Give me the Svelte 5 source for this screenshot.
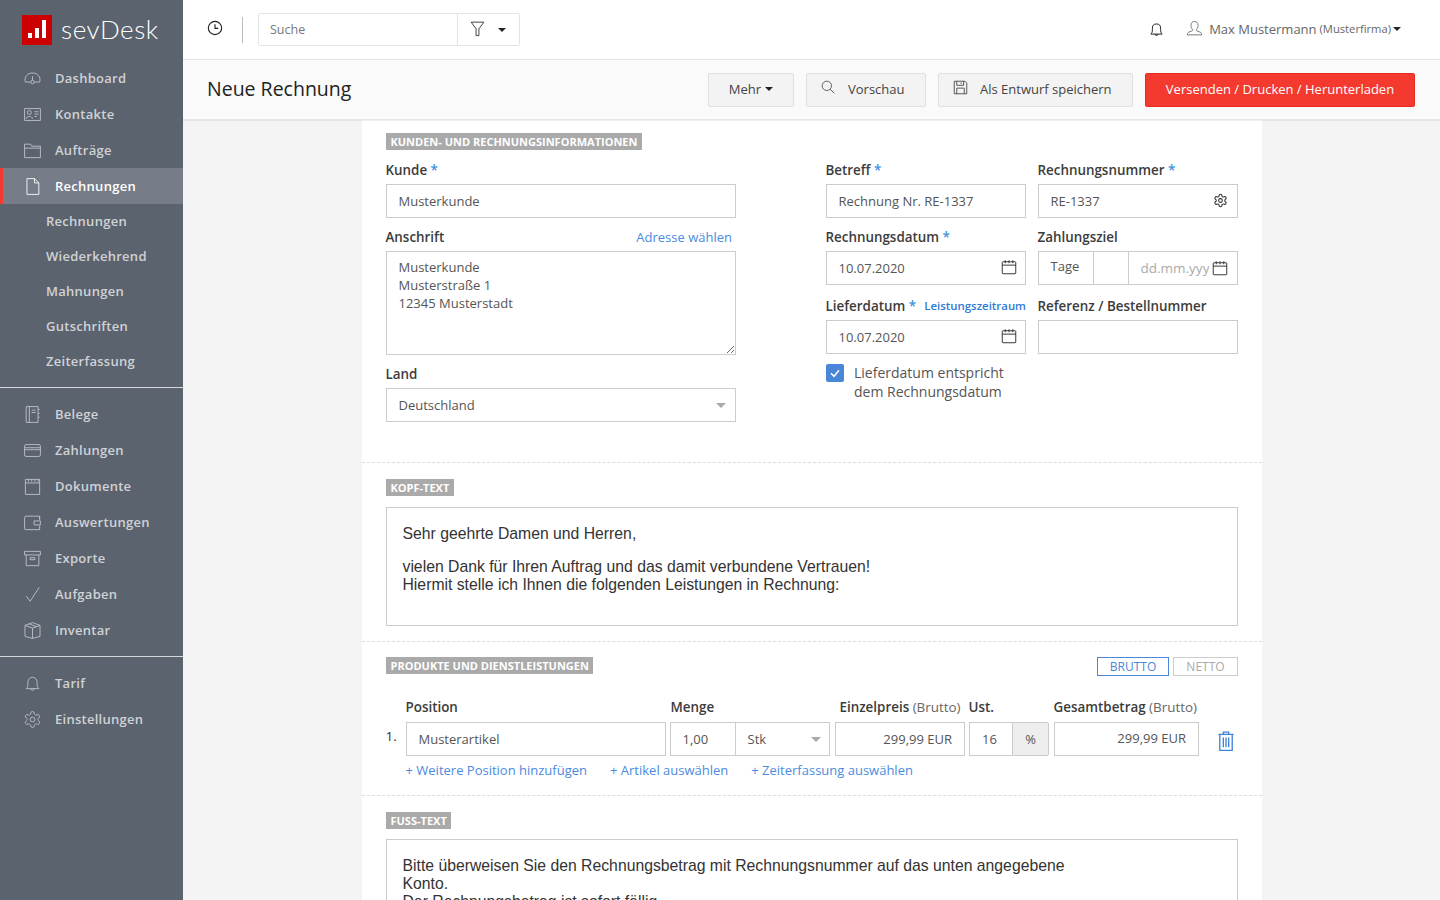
<script>
  const gear = 'M12.22 2h-.44a2 2 0 0 0-2 2v.18a2 2 0 0 1-1 1.73l-.43.25a2 2 0 0 1-2 0l-.15-.08a2 2 0 0 0-2.73.73l-.22.38a2 2 0 0 0 .73 2.73l.15.1a2 2 0 0 1 1 1.72v.51a2 2 0 0 1-1 1.74l-.15.09a2 2 0 0 0-.73 2.73l.22.38a2 2 0 0 0 2.73.73l.15-.08a2 2 0 0 1 2 0l.43.25a2 2 0 0 1 1 1.73V20a2 2 0 0 0 2 2h.44a2 2 0 0 0 2-2v-.18a2 2 0 0 1 1-1.73l.43-.25a2 2 0 0 1 2 0l.15.08a2 2 0 0 0 2.73-.73l.22-.39a2 2 0 0 0-.73-2.73l-.15-.08a2 2 0 0 1-1-1.74v-.5a2 2 0 0 1 1-1.74l.15-.09a2 2 0 0 0 .73-2.73l-.22-.38a2 2 0 0 0-2.73-.73l-.15.08a2 2 0 0 1-2 0l-.43-.25a2 2 0 0 1-1-1.73V4a2 2 0 0 0-2-2zM15 12a3 3 0 1 1-6 0a3 3 0 1 1 6 0z';
  const bell = 'M4 18.500c1.600-1.600 2.200-3 2.200-6.500V10a5.800 5.800 0 0 1 11.600 0v2c0 3.500.6 4.900 2.200 6.500zM10 18.500a2 2 0 0 0 4 0';
  const calendar = 'M4 5h16a1 1 0 0 1 1 1v14a1 1 0 0 1-1 1H4a1 1 0 0 1-1-1V6a1 1 0 0 1 1-1zM3 9.500h18M7 3v4M12 3v4M17 3v4';

  const first = [
    { label: 'Dashboard', d: 'M3 16.500C1 10.500 5.500 5 12 5s11 5.500 9 11.500h-6.800M9.800 16.500H3M12 9v5.300M9.800 16.500a2.200 2.200 0 1 0 4.400 0a2.200 2.200 0 1 0-4.400 0' },
    { label: 'Kontakte', d: 'M2 4.500h20v15H2zM8 12a2.500 2.500 0 1 0 0-5a2.500 2.500 0 0 0 0 5zM4 17.500c0-4 8-4 8 0M14.500 8.500h5M14.500 11.500h5M14.500 14.500h3' },
    { label: 'Aufträge', d: 'M2 4h7.500l1.500 2.500h11V21H2zM2 9h20' },
    { label: 'Rechnungen', d: 'M5 2h9.500L20 7.500V22H5zM14.500 2v5.500H20', active: true }
  ];
  const sub = ['Rechnungen', 'Wiederkehrend', 'Mahnungen', 'Gutschriften', 'Zeiterfassung'];
  const second = [
    { label: 'Belege', d: 'M4 2h15v20H4zM8 2v20M11 6.500h5M11 9.500h5M19 5.500h2M19 10.500h2M19 15.500h2' },
    { label: 'Zahlungen', d: 'M4 4.500h16a2 2 0 0 1 2 2v11a2 2 0 0 1-2 2H4a2 2 0 0 1-2-2v-11a2 2 0 0 1 2-2zM2 8.500h20M2 11h20' },
    { label: 'Dokumente', d: 'M3 3h18v19H3zM3 7.500h18M7 3v3M11 3v3M15 3v3M19 3v3' },
    { label: 'Auswertungen', d: 'M21 9V4H4a2 2 0 0 0-2 2v14a1 1 0 0 0 1 1h18v-5M14 10h8v5h-8zM21 4v3' },
    { label: 'Exporte', d: 'M2 3h20v4.500H2zM4 7.500V21h16V7.500M9 11h6v2.500H9z' },
    { label: 'Aufgaben', d: 'M4 14l5 6.500L20.500 3' },
    { label: 'Inventar', d: 'M12 2l9.500 3.500v14L12 22l-9.500-2.500v-14zM2.500 5.500L12 9l9.500-3.500M12 9v13M7.500 3.500l9.500 3.800' }
  ];
  const third = [
    { label: 'Tarif', d: bell },
    { label: 'Einstellungen', d: gear }
  ];
</script>

{#snippet navItem(item)}
  <a class="item" class:active={item.active} href="#/">
    <svg class="nav-icon" viewBox="0 0 24 24"><path d={item.d} /></svg>
    <span>{item.label}</span>
  </a>
{/snippet}

{#snippet icon(d, cls)}
  <svg class={cls} viewBox="0 0 24 24"><path d={d} /></svg>
{/snippet}

<div class="app">
  <aside class="sidebar">
    <div class="brand">
      <div class="mark"><i class="b1"></i><i class="b2"></i><i class="b3"></i></div>
      <span class="wordmark">sevDesk</span>
    </div>
    <nav>
      {#each first as item}{@render navItem(item)}{/each}
      {#each sub as s}<a class="subitem" href="#/">{s}</a>{/each}
      <hr />
      {#each second as item}{@render navItem(item)}{/each}
      <hr />
      {#each third as item}{@render navItem(item)}{/each}
    </nav>
  </aside>

  <div class="main">
    <header class="topbar">
      <svg class="clock" viewBox="0 0 24 24"><path d="M12 2a10 10 0 1 0 0 20a10 10 0 0 0 0-20zM12 6.500V12.500H17" /></svg>
      <span class="vsep"></span>
      <div class="search">
        <input class="search-input" placeholder="Suche" readonly />
        <button class="filter">
          <svg viewBox="0 0 24 24"><path d="M3 3h18l-7 9.500V22h-4v-9.500z" /></svg>
          <i class="caret dark"></i>
        </button>
      </div>
      <div class="spacer"></div>
      {@render icon(bell, 'top-bell')}
      <div class="user">
        <svg viewBox="0 0 24 24"><path d="M12 2c3 0 5 2.300 5 5.500c0 2.500-1 4.500-2.200 5.800c-.6.7-.3 1.700.5 2l5 2c1 .4 1.700 1.300 1.700 3.700H2c0-2.400.7-3.300 1.700-3.700l5-2c.8-.3 1.100-1.300.5-2C8 12 7 10 7 7.500C7 4.300 9 2 12 2z" /></svg>
        <span class="uname">Max Mustermann</span>
        <small>(Musterfirma)</small>
        <i class="caret dark small"></i>
      </div>
    </header>

    <div class="subheader">
      <h1>Neue Rechnung</h1>
      <div class="actions">
        <button class="btn mehr">Mehr <i class="caret dark"></i></button>
        <button class="btn vorschau">
          <svg viewBox="0 0 24 24"><path d="M10 2a8 8 0 1 0 0 16a8 8 0 0 0 0-16zM15.800 15.800L23 23" /></svg>
          Vorschau
        </button>
        <button class="btn entwurf">
          <svg viewBox="0 0 24 24"><path d="M2 2h17l3 3v17H2zM6 2v6.500h11V2M13 4v2.500M6 22v-9h12v9" /></svg>
          Als Entwurf speichern
        </button>
        <button class="btn primary">Versenden / Drucken / Herunterladen</button>
      </div>
    </div>

    <div class="scroll">
      <div class="card">
        <section class="info">
          <span class="tag">KUNDEN- UND RECHNUNGSINFORMATIONEN</span>
          <div class="columns">
            <div class="col-left">
              <div class="field">
                <label for="kunde">Kunde <em>*</em></label>
                <input id="kunde" value="Musterkunde" readonly />
              </div>
              <div class="field">
                <div class="label-row">
                  <label for="anschrift">Anschrift</label>
                  <a href="#/" class="link">Adresse wählen</a>
                </div>
                <textarea id="anschrift" readonly>Musterkunde
Musterstraße 1
12345 Musterstadt</textarea>
              </div>
              <div class="field">
                <label for="land">Land</label>
                <div class="select" id="land">Deutschland<i class="caret grey"></i></div>
              </div>
            </div>

            <div class="col-right">
              <div class="field">
                <label for="betreff">Betreff <em>*</em></label>
                <input id="betreff" value="Rechnung Nr. RE-1337" readonly />
              </div>
              <div class="field">
                <label for="renr">Rechnungsnummer <em>*</em></label>
                <div class="with-icon">
                  <input id="renr" value="RE-1337" readonly />
                  {@render icon(gear, 'in-icon gear')}
                </div>
              </div>
              <div class="field">
                <label for="redat">Rechnungsdatum <em>*</em></label>
                <div class="with-icon">
                  <input id="redat" value="10.07.2020" readonly />
                  {@render icon(calendar, 'in-icon')}
                </div>
              </div>
              <div class="field">
                <label for="ziel">Zahlungsziel</label>
                <div class="ziel">
                  <span class="tage">Tage</span>
                  <span class="tage-val"></span>
                  <span class="date-ph"><input id="ziel" placeholder="dd.mm.yyyy" readonly />
                    {@render icon(calendar, 'in-icon')}</span>
                </div>
              </div>
              <div class="field low">
                <div class="label-row">
                  <label for="liefer">Lieferdatum <em>*</em></label>
                  <a href="#/" class="link mini">Leistungszeitraum</a>
                </div>
                <div class="with-icon">
                  <input id="liefer" value="10.07.2020" readonly />
                  {@render icon(calendar, 'in-icon')}
                </div>
              </div>
              <div class="field low">
                <label for="ref">Referenz / Bestellnummer</label>
                <input id="ref" readonly />
              </div>
              <div class="check">
                <span class="box"><svg viewBox="0 0 24 24"><path d="M6 12.500l4.500 4.500L18 8" /></svg></span>
                <span class="check-text">Lieferdatum entspricht<br />dem Rechnungsdatum</span>
              </div>
            </div>
          </div>
        </section>

        <section class="kopf">
          <span class="tag">KOPF-TEXT</span>
          <div class="editor head">
            <p>Sehr geehrte Damen und Herren,</p>
            <p>vielen Dank für Ihren Auftrag und das damit verbundene Vertrauen!<br />Hiermit stelle ich Ihnen die folgenden Leistungen in Rechnung:</p>
          </div>
        </section>

        <section class="produkte">
          <div class="prod-head">
            <span class="tag">PRODUKTE UND DIENSTLEISTUNGEN</span>
            <div class="toggle">
              <span class="on">BRUTTO</span>
              <span class="off">NETTO</span>
            </div>
          </div>
          <div class="line">
            <span class="num">1.</span>
            <div class="c-pos">
              <label for="pos">Position</label>
              <input id="pos" value="Musterartikel" readonly />
            </div>
            <div class="c-menge">
              <label for="menge">Menge</label>
              <div class="joined">
                <input id="menge" class="m" value="1,00" readonly />
                <div class="select stk">Stk<i class="caret grey"></i></div>
              </div>
            </div>
            <div class="c-preis">
              <label for="preis">Einzelpreis <span>(Brutto)</span></label>
              <input id="preis" class="right" value="299,99 EUR" readonly />
            </div>
            <div class="c-ust">
              <label for="ust">Ust.</label>
              <div class="joined">
                <input id="ust" class="u" value="16" readonly />
                <span class="pct">%</span>
              </div>
            </div>
            <div class="c-total">
              <label for="total">Gesamtbetrag <span>(Brutto)</span></label>
              <input id="total" class="right up" value="299,99 EUR" readonly />
            </div>
            <svg class="trash" viewBox="0 0 18 24"><path d="M.5 4.500h17M6 4.500V2h6v2.500M2 4.500V22.500h14V4.500M6 8v11M9 8v11M12 8v11" /></svg>
          </div>
          <div class="links">
            <a href="#/" class="link">+ Weitere Position hinzufügen</a>
            <a href="#/" class="link">+ Artikel auswählen</a>
            <a href="#/" class="link">+ Zeiterfassung auswählen</a>
          </div>
        </section>

        <section class="fuss">
          <span class="tag">FUSS-TEXT</span>
          <div class="editor">
            <p>Bitte überweisen Sie den Rechnungsbetrag mit Rechnungsnummer auf das unten angegebene<br />Konto.<br />Der Rechnungsbetrag ist sofort fällig.</p>
          </div>
        </section>
      </div>
    </div>
  </div>
</div>

<style>
  :global(body) { margin: 0; }
  * { box-sizing: border-box; }
  .app {
    display: flex; width: 1440px; height: 900px; overflow: hidden;
    font-family: "Open Sans", "Liberation Sans", sans-serif; color: #555;
    background: #f4f4f4;
  }
  a { text-decoration: none; }

  .sidebar { width: 183px; flex: none; background: #5b636f; color: #d0d2d5; }
  .brand { height: 60px; display: flex; align-items: center; padding-left: 22px; gap: 9px; }
  .mark {
    width: 30px; height: 30px; background: #cc0000; display: flex; align-items: flex-end;
    justify-content: center; gap: 3px; padding-bottom: 7px;
  }
  .mark i { width: 4px; background: #fff; display: block; }
  .b1 { height: 5px; } .b2 { height: 10px; } .b3 { height: 18px; }
  .wordmark { font-family: Lato, sans-serif; font-size: 26px; font-weight: 300; color: #fff; letter-spacing: .6px; margin-top: -2px; }
  nav { display: flex; flex-direction: column; }
  .item {
    height: 36px; display: flex; align-items: center; padding-left: 23px; gap: 13px;
    font-size: 13px; font-weight: 600; letter-spacing: .27px; color: #d0d2d5;
  }
  .item.active { background: #767d88; color: #fff; box-shadow: inset 3px 0 0 #f4392f; }
  .nav-icon { width: 19px; height: 19px; fill: none; stroke: #c3c6ca; stroke-width: 1.100; }
  .item.active .nav-icon { stroke: #fff; }
  .subitem {
    height: 35px; display: flex; align-items: center; padding: 0 0 1px 46px;
    font-size: 13px; font-weight: 600; letter-spacing: .27px; color: #d0d2d5;
  }
  hr { width: 100%; margin: 8px 0; height: 1px; border: 0; background: #d5d7da; }

  .main { flex: 1; min-width: 0; display: flex; flex-direction: column; }
  .topbar {
    height: 60px; flex: none; background: #fff; border-bottom: 1px solid #e3e3e3;
    display: flex; align-items: center; padding: 0 39px 0 24px;
  }
  .clock { width: 16px; height: 16px; margin-top: -3px; fill: none; stroke: #222; stroke-width: 1.700; }
  .vsep { width: 1px; height: 26px; background: #bbb; margin: 0 15px 0 19px; }
  .search { display: flex; height: 33px; width: 262px; border: 1px solid #e3e3e3; border-radius: 2px; }
  .search-input {
    width: 199px; height: 31px; border: 0; border-right: 1px solid #e3e3e3; padding: 0 11px;
    font: 12.500px "Open Sans", sans-serif; outline: none;
  }
  .search-input::placeholder { color: #777; }
  .filter { flex: 1; background: #fff; border: 0; display: flex; align-items: center; padding: 0 0 0 11px; }
  .filter svg { width: 17px; height: 17px; fill: none; stroke: #333; stroke-width: 1.300; margin-top: -3px; }
  .filter .caret { margin-left: 12px; }
  .spacer { flex: 1; }
  .top-bell { width: 17px; height: 17px; fill: none; stroke: #222; stroke-width: 1.400; }
  .user { display: flex; align-items: center; margin-left: 21px; color: #666; padding-bottom: 2px; }
  .user svg { width: 17px; height: 17px; fill: none; stroke: #666; stroke-width: 1.200; margin-right: 6px; }
  .uname { font-size: 13px; }
  .user small { font-size: 11.200px; margin-left: 3px; }
  .user .caret { margin-left: 2px; }
  .caret {
    display: inline-block; width: 0; height: 0; border-left: 4px solid transparent;
    border-right: 4px solid transparent; border-top: 4px solid #333; vertical-align: middle;
  }
  .caret.dark { border-top-color: #222; }

  .subheader {
    height: 60px; flex: none; background: #fafafa; display: flex; align-items: center;
    justify-content: space-between; padding: 0 25px 0 24px; border-bottom: 1px solid #e6e6e6;
    box-shadow: 0 1px 1px rgba(0,0,0,.06); position: relative; z-index: 1;
  }
  h1 { margin: 0 0 2px; font-size: 19.500px; font-weight: 400; color: #222; }
  .actions { display: flex; gap: 12px; }
  .btn {
    height: 34px; border: 1px solid #e0e0e0; border-radius: 2px; background: #f3f3f3; color: #444;
    font: 13px "Open Sans", sans-serif; display: flex; align-items: center; justify-content: center; padding: 0 0 2px;
  }
  .btn svg { width: 14px; height: 14px; fill: none; stroke: #444; stroke-width: 1.400; }
  .mehr { width: 86px; gap: 4px; }
  .vorschau { width: 120px; gap: 13px; justify-content: flex-start; padding-left: 14px; }
  .entwurf { width: 195px; gap: 12px; justify-content: flex-start; padding-left: 14px; }
  .entwurf svg { width: 15px; height: 15px; margin-top: -3px; }
  .vorschau svg { margin-top: -3px; }
  .primary { width: 270px; background: #f4392f; border-color: #ea2a20; color: #fff; }

  .scroll { flex: 1; min-height: 0; overflow: hidden; }
  .card { width: 900px; margin-left: 179px; background: #fff; }
  section { padding: 0 24px; border-bottom: 1px dashed #dcdcdc; }
  .tag {
    display: inline-block; background: #aaa; color: #fff; font-size: 11px; font-weight: 700;
    line-height: 17px; height: 17px; padding: 0 4.500px 0 4.500px;
  }
  label { display: block; font-size: 13.400px; font-weight: 600; color: #3c3c3c; line-height: 20px; margin-left: -.5px; }
  label span { font-weight: 400; color: #666; }
  em { color: #3b94e0; font-style: normal; }
  input, textarea, .select {
    display: block; width: 100%; height: 34px; border: 1px solid #ccc; background: #fff; border-radius: 0;
    padding: 0 12px 0 11.500px; font: 13px "Open Sans", sans-serif; color: #555; outline: none;
  }
  .link { color: #4a8be0; font-size: 13px; }

  .info { padding-top: 13px; height: 343px; }
  .info .tag { display: block; width: max-content; margin-bottom: 10px; }
  .columns { display: flex; gap: 90px; }
  .col-left { width: 350px; }
  .col-right { width: 412px; display: grid; grid-template-columns: 200px 200px; column-gap: 12px; align-content: start; }
  .field { margin-bottom: 9px; }
  .field label + input, .field label + .with-icon, .field label + .select,
  .field label + .ziel { margin-top: 4px; }
  .label-row { display: flex; justify-content: space-between; align-items: center; margin-bottom: 4px; }
  .label-row .link { padding-right: 4px; }
  .link.mini { font-size: 11.400px; font-weight: 600; padding: 0 0 1px; color: #2f7ad6; }
  textarea {
    height: 104px; padding: 6px 12px 6px 11.500px; line-height: 18px; resize: vertical; overflow: hidden;
  }
  .select { display: flex; align-items: center; justify-content: space-between; }
  .caret.grey { border-top-color: #aaa; border-left-width: 5px; border-right-width: 5px; border-top-width: 5px; margin-right: -3px; }
  .stk .caret.grey { margin-right: -4px; }
  .with-icon { position: relative; }
  .in-icon { width: 18px; height: 18px; fill: none; stroke: #333; stroke-width: 1.300; }
  .with-icon .in-icon { position: absolute; right: 8px; top: 7px; }
  .with-icon .gear { width: 15px; height: 15px; top: 9px; right: 10px; stroke-width: 1.700; }
  .field.low { margin-top: 2px; margin-bottom: 0; }
  .ziel { display: flex; height: 34px; border: 1px solid #ccc; }
  .tage { width: 55px; border-right: 1px solid #ccc; padding-left: 11.500px; font-size: 13px; line-height: 29px; }
  .tage-val { width: 35px; border-right: 1px solid #ccc; }
  .date-ph { flex: 1; display: flex; align-items: center; position: relative; }
  .date-ph input { border: 0; width: 80px; padding: 0 0 0 11.500px; height: 32px; font-size: 13.500px; }
  .date-ph input::placeholder { color: #aaa; }
  .date-ph .in-icon { position: absolute; right: 8px; top: 7px; }
  .check { grid-column: 1; display: flex; gap: 10px; margin-top: 10px; font-size: 14px; line-height: 19px; color: #555; }
  .check-text { margin-top: -1px; }
  .box {
    width: 18px; height: 18px; flex: none; background: #4a86d8; border-radius: 2px;
    display: flex; align-items: center; justify-content: center;
  }
  .box svg { width: 16px; height: 16px; fill: none; stroke: #fff; stroke-width: 2.200; }

  .kopf { padding-top: 16px; height: 179px; }
  .kopf .tag { display: block; width: max-content; margin-bottom: 11px; }
  .editor {
    border: 1px solid #ccc; padding: 17px 16px 17px 15.500px; font: 15.750px/18px "Liberation Sans", Arial, sans-serif; color: #333;
  }
  .editor.head { height: 119px; }
  .editor p { margin: 0 0 15px; }

  .produkte { height: 154px; padding-top: 15px; }
  .prod-head { display: flex; justify-content: space-between; align-items: flex-start; height: 40px; }
  .toggle { display: flex; gap: 4px; margin-top: 0; }
  .toggle span { width: 72px; height: 19px; text-align: center; font-size: 12px; line-height: 18px; }
  .on { border: 1px solid #4a86d8; color: #4a86d8; }
  .off { width: 65px !important; border: 1px solid #ccc; color: #aaa; }
  .line { display: flex; align-items: flex-end; position: relative; }
  .line label { line-height: 20px; margin-bottom: 5px; }
  .num { width: 20px; font-size: 13.500px; color: #333; position: absolute; left: -.5px; top: 30px; }
  .c-pos { width: 260px; margin-left: 20px; }
  .c-menge { width: 160px; margin-left: 4px; }
  .c-menge label { padding-left: 1px; }
  .c-preis { width: 130px; margin-left: 5px; }
  .c-preis label { padding-left: 5px; }
  .c-ust { width: 80px; margin-left: 4px; }
  .c-total { width: 145px; margin-left: 5px; }
  .joined { display: flex; }
  .m { width: 65px; border-right: 0; }
  .stk { flex: 1; }
  .u { width: 43px; border-right: 0; padding: 0 12px; }
  .pct { width: 37px; height: 34px; background: #eee; border: 1px solid #ccc; border-radius: 0 2px 2px 0; text-align: center; line-height: 32px; font-size: 13px; }
  .right { text-align: right; }
  .up { padding-bottom: 2px; }
  .trash { width: 16px; height: 22px; margin: 0 0 4px 19px; fill: none; stroke: #3f83d8; stroke-width: 1.500; }
  .links { display: flex; gap: 23px; padding-left: 20px; margin-top: 5px; line-height: 19px; }
  .links .link:first-child { margin-left: -.5px; }

  .fuss { padding-top: 16px; border-bottom: 0; }
  .fuss .tag { display: block; width: max-content; margin-bottom: 10px; }
  .fuss .editor { height: 120px; }
</style>
